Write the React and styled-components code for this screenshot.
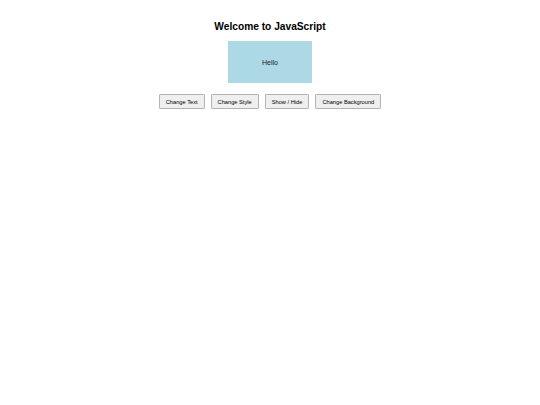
import styled, { createGlobalStyle } from "styled-components";

const Global = createGlobalStyle`
  html, body {
    margin: 0;
    padding: 0;
    background: #fff;
    font-family: "Liberation Sans", Arial, sans-serif;
  }
`;

const Page = styled.div`
  display: flex;
  flex-direction: column;
  align-items: center;
  padding-top: 21px;
`;

const Title = styled.h1`
  margin: 0;
  font-size: 10.2px;
  line-height: 12px;
  font-weight: bold;
  color: #000;
`;

const Box = styled.div`
  margin-top: 8px;
  width: 84px;
  height: 42px;
  background: ${(p) => p.bg};
  display: flex;
  align-items: center;
  justify-content: center;
  font-size: 7px;
  color: #222;
`;

const Toolbar = styled.div`
  display: flex;
  gap: 6px;
  margin-top: 11.3px;
`;

const Button = styled.button`
  height: 14.5px;
  padding: 0 6px;
  font-family: "Liberation Sans", Arial, sans-serif;
  font-size: 5.7px;
  color: #000;
  background: #efefef;
  border: 1px solid #b3b3b3;
  border-radius: 1px;
  cursor: pointer;
`;

export default function App() {
  return (
    <>
      <Global />
      <Page>
        <Title>Welcome to JavaScript</Title>
        <Box bg="#add8e6">Hello</Box>
        <Toolbar>
          <Button>Change Text</Button>
          <Button>Change Style</Button>
          <Button>Show / Hide</Button>
          <Button>Change Background</Button>
        </Toolbar>
      </Page>
    </>
  );
}
